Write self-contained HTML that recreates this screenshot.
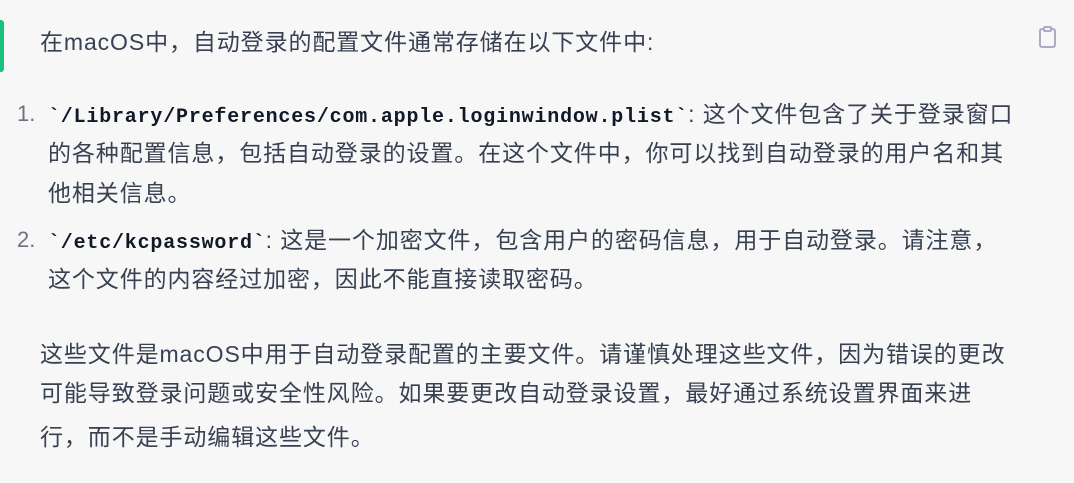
<!DOCTYPE html>
<html><head><meta charset="utf-8"><style>
html,body{margin:0;padding:0;}
body{width:1074px;height:483px;background:#f7f7f8;position:relative;overflow:hidden;font-family:"Liberation Sans","Noto Sans CJK SC",sans-serif;font-size:23px;letter-spacing:0.9px;color:#374151;}
.l{position:absolute;white-space:nowrap;line-height:26px;}
.n{color:#6b7280;font-size:22px;letter-spacing:0;}
code{font-family:"Liberation Mono",monospace;font-weight:bold;color:#111827;font-size:20px;letter-spacing:0.8px;}
.bar{position:absolute;left:0;top:20px;width:4px;height:52px;background:#19c37d;border-radius:0 3px 3px 0;}
</style></head><body>
<div class="bar"></div>
<div class="l" style="left:40px;top:29px">在macOS中，自动登录的配置文件通常存储在以下文件中:</div>
<svg style="position:absolute;left:1038px;top:25px" width="20" height="24" viewBox="0 0 20 24" fill="none" stroke="#acabc3" stroke-width="2" stroke-linejoin="round"><rect x="2" y="4" width="15" height="18" rx="2"/><rect x="6" y="2" width="7" height="4" rx="1" fill="#f7f7f8"/></svg>
<div class="l n" style="left:17px;top:101px">1.</div>
<div class="l" style="left:48px;top:101px"><code>`/Library/Preferences/com.apple.loginwindow.plist`</code>: 这个文件包含了关于登录窗口</div>
<div class="l" style="left:48px;top:140px">的各种配置信息，包括自动登录的设置。在这个文件中，你可以找到自动登录的用户名和其</div>
<div class="l" style="left:48px;top:180px">他相关信息。</div>
<div class="l n" style="left:17px;top:227px">2.</div>
<div class="l" style="left:48px;top:227px"><code>`/etc/kcpassword`</code>: 这是一个加密文件，包含用户的密码信息，用于自动登录。请注意，</div>
<div class="l" style="left:48px;top:266px">这个文件的内容经过加密，因此不能直接读取密码。</div>
<div class="l" style="left:40px;top:341px">这些文件是macOS中用于自动登录配置的主要文件。请谨慎处理这些文件，因为错误的更改</div>
<div class="l" style="left:40px;top:380px">可能导致登录问题或安全性风险。如果要更改自动登录设置，最好通过系统设置界面来进</div>
<div class="l" style="left:40px;top:424px">行，而不是手动编辑这些文件。</div>
</body></html>
